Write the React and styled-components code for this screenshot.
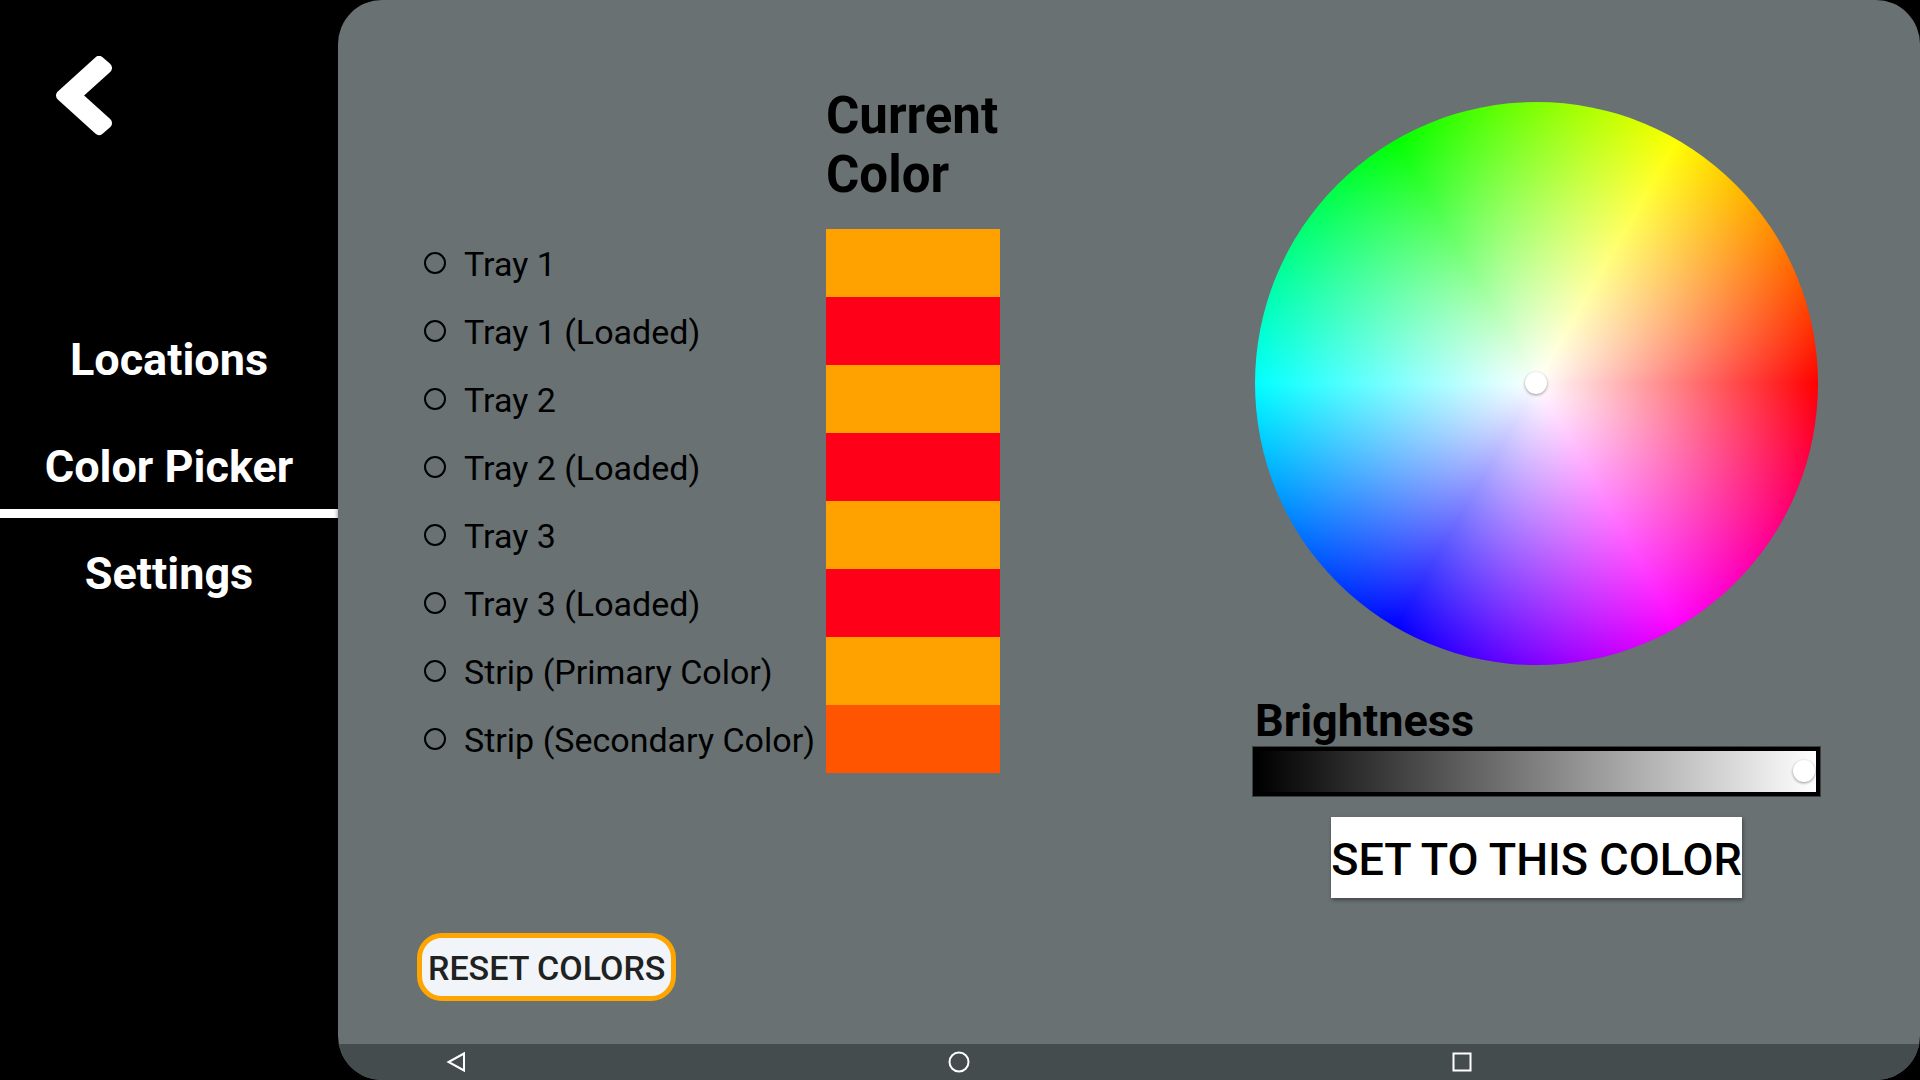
import React, { useState } from "react";
import styled, { createGlobalStyle } from "styled-components";

const GlobalStyle = createGlobalStyle`
  * { box-sizing: border-box; }
  body {
    margin: 0;
    background: #000;
    font-family: Roboto, "Liberation Sans", sans-serif;
  }
  button, input { font-family: inherit; }
`;

const Screen = styled.div`
  display: flex;
  min-height: 100vh;
  background: #000;
`;

const Sidebar = styled.aside`
  flex: 0 0 338px;
  padding-top: 56px;
`;

const BackButton = styled.button`
  display: block;
  margin: 0 0 168px 56px;
  padding: 0;
  border: 0;
  background: none;
  cursor: pointer;

  svg { display: block; }
`;

const Tabs = styled.nav`
  display: flex;
  flex-direction: column;
`;

const Tab = styled.a`
  display: flex;
  align-items: center;
  justify-content: center;
  height: 107px;
  padding-top: 14px;
  border-bottom: 9px solid ${(p) => (p.$active ? "#fff" : "transparent")};
  color: #fff;
  font-size: 45px;
  font-weight: 700;
  line-height: 52px;
  text-decoration: none;
`;

const Panel = styled.div`
  display: flex;
  flex: 1;
  flex-direction: column;
  overflow: hidden;
  border-radius: 44px;
  background: #697173;
  box-shadow: 0 0 4px rgba(0, 0, 0, 0.5);
`;

const Content = styled.main`
  display: flex;
  flex: 1;
  justify-content: space-between;
  padding: 86px 99px 43px 79px;
`;

const Targets = styled.section`
  display: flex;
  flex-direction: column;
  align-items: flex-start;
  justify-content: space-between;
`;

const TargetList = styled.div`
  display: grid;
  grid-template-columns: 409px 174px;
`;

const ListHeading = styled.h2`
  grid-column: 2;
  margin: 0 0 25px;
  font-size: 51px;
  font-weight: 700;
  line-height: 59px;
`;

const TargetLabel = styled.label`
  display: flex;
  align-items: center;
  gap: 18px;
  height: 68px;
  padding-left: 7px;
  font-size: 34px;
  line-height: 40px;
  white-space: nowrap;
`;

const TargetName = styled.span`
  padding-top: 2px;
`;

const Radio = styled.input`
  appearance: none;
  width: 22px;
  height: 22px;
  margin: 0;
  border: 2px solid #000;
  border-radius: 50%;

  &:checked {
    background: radial-gradient(circle, #000 5px, transparent 6px);
  }
`;

const Swatch = styled.div`
  background: ${(p) => p.$color};
`;

const ResetButton = styled.button`
  height: 68px;
  padding: 2px 6px 0;
  border: 5px solid #ffa500;
  border-radius: 25px;
  background: #f1f4f8;
  color: #202222;
  font-size: 34px;
  font-weight: 500;
  line-height: 40px;
  cursor: pointer;
`;

const Picker = styled.section`
  display: flex;
  flex: 0 0 569px;
  flex-direction: column;
  align-items: center;
  padding-top: 16px;
`;

const Wheel = styled.div`
  position: relative;
  width: 563px;
  height: 563px;
  border-radius: 50%;
  background:
    radial-gradient(circle closest-side, #fff, rgba(255, 255, 255, 0)),
    conic-gradient(from 90deg, #f00, #f0f, #00f, #0ff, #0f0, #ff0, #f00);
`;

const WheelThumb = styled.span`
  position: absolute;
  top: 270px;
  left: 270px;
  width: 22px;
  height: 22px;
  border-radius: 50%;
  background: #fff;
  box-shadow: 0 1px 3px rgba(0, 0, 0, 0.4);
`;

const BrightnessLabel = styled.label`
  align-self: stretch;
  margin-top: 30px;
  padding-left: 3px;
  font-size: 45px;
  font-weight: 700;
  line-height: 52px;
`;

const thumb = `
  width: 22px;
  height: 22px;
  border: 0;
  border-radius: 50%;
  background: #fff;
  box-shadow: 0 1px 3px rgba(0, 0, 0, 0.4);
`;

const Brightness = styled.input`
  appearance: none;
  display: block;
  width: 100%;
  height: 51px;
  margin: -1px 0 0;
  padding: 0 1px 1px 0;
  border: 5px solid #000;
  outline: 1px solid #3a3f40;
  outline-offset: -1px;
  background: linear-gradient(to right, #000, #fff);

  &::-webkit-slider-thumb {
    appearance: none;
    ${thumb}
  }
  &::-moz-range-thumb { ${thumb} }
`;

const SetButton = styled.button`
  height: 81px;
  margin-top: 20px;
  padding: 5px 0 0;
  border: 0;
  background: #fff;
  box-shadow: 1px 2px 4px rgba(0, 0, 0, 0.4);
  color: #000;
  font-size: 45px;
  font-weight: 500;
  line-height: 52px;
  white-space: nowrap;
  cursor: pointer;
`;

const SystemBar = styled.footer`
  display: flex;
  justify-content: space-between;
  height: 36px;
  padding: 0 398px 0 58px;
  background: #454c4d;
`;

const SystemButton = styled.button`
  display: flex;
  align-items: center;
  justify-content: center;
  width: 120px;
  padding: 0;
  border: 0;
  background: none;
  cursor: pointer;
`;

const TABS = ["Locations", "Color Picker", "Settings"];

const TARGETS = [
  ["Tray 1", "#ffa200"],
  ["Tray 1 (Loaded)", "#ff0019"],
  ["Tray 2", "#ffa200"],
  ["Tray 2 (Loaded)", "#ff0019"],
  ["Tray 3", "#ffa200"],
  ["Tray 3 (Loaded)", "#ff0019"],
  ["Strip (Primary Color)", "#ffa200"],
  ["Strip (Secondary Color)", "#ff5500"],
];

const SYSTEM_ICONS = [
  ["Back", <path d="M21 4.5 5.5 13 21 21.5Z" />],
  ["Home", <circle cx="13" cy="13" r="9.5" />],
  ["Recent apps", <rect x="4.5" y="4.5" width="17" height="17" />],
];

export default function App() {
  const [target, setTarget] = useState(null);
  const [level, setLevel] = useState(100);

  return (
    <>
      <GlobalStyle />
      <Screen>
        <Sidebar>
          <BackButton type="button" aria-label="Back">
            <svg width="56" height="80" viewBox="0 0 56 80">
              <path
                d="M5.5 39.5 43 5.5 50.5 12 20 39.5 50.5 67 43 73.5Z"
                fill="#fff"
                stroke="#fff"
                strokeWidth="11"
                strokeLinejoin="round"
              />
            </svg>
          </BackButton>
          <Tabs>
            {TABS.map((name) => (
              <Tab
                key={name}
                href="#"
                $active={name === "Color Picker"}
                aria-current={name === "Color Picker" ? "page" : undefined}
              >
                {name}
              </Tab>
            ))}
          </Tabs>
        </Sidebar>
        <Panel>
          <Content>
            <Targets>
              <TargetList>
                <ListHeading>Current Color</ListHeading>
                {TARGETS.map(([name, color]) => (
                  <React.Fragment key={name}>
                    <TargetLabel>
                      <Radio
                        type="radio"
                        name="target"
                        checked={target === name}
                        onChange={() => setTarget(name)}
                      />
                      <TargetName>{name}</TargetName>
                    </TargetLabel>
                    <Swatch $color={color} />
                  </React.Fragment>
                ))}
              </TargetList>
              <ResetButton type="button">RESET COLORS</ResetButton>
            </Targets>
            <Picker>
              <Wheel>
                <WheelThumb />
              </Wheel>
              <BrightnessLabel htmlFor="brightness">Brightness</BrightnessLabel>
              <Brightness
                id="brightness"
                type="range"
                min="0"
                max="100"
                value={level}
                onChange={(e) => setLevel(Number(e.target.value))}
              />
              <SetButton type="button">SET TO THIS COLOR</SetButton>
            </Picker>
          </Content>
          <SystemBar>
            {SYSTEM_ICONS.map(([name, shape]) => (
              <SystemButton key={name} type="button" aria-label={name}>
                <svg width="26" height="26" viewBox="0 0 26 26" fill="none" stroke="#fff" strokeWidth="2">
                  {shape}
                </svg>
              </SystemButton>
            ))}
          </SystemBar>
        </Panel>
      </Screen>
    </>
  );
}
